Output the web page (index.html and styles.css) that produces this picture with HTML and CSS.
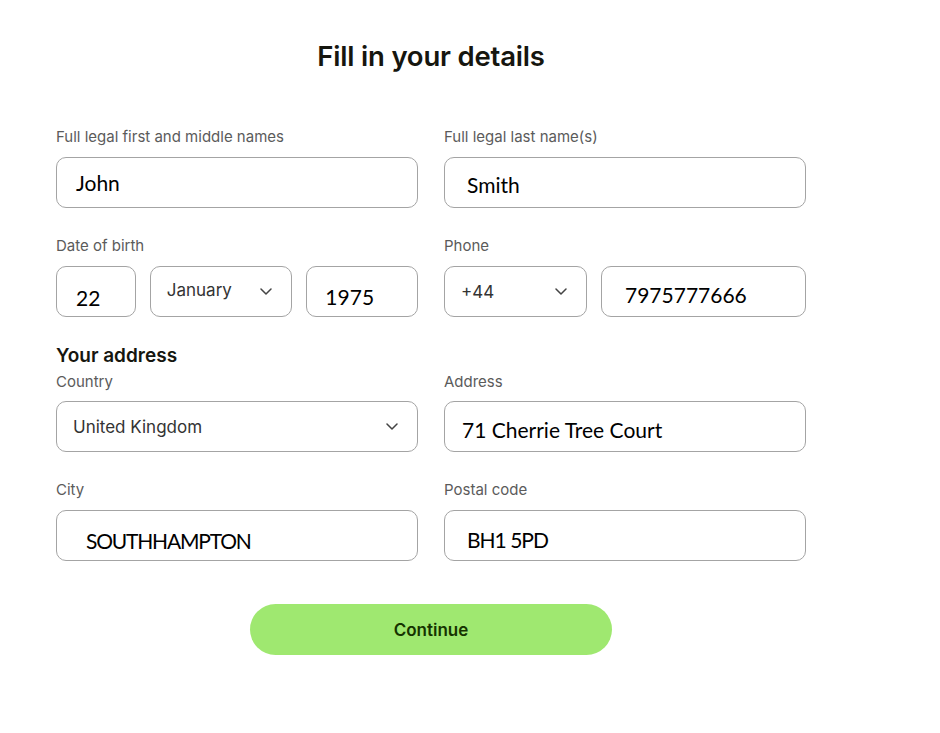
FILE: index.html
```html
<!DOCTYPE html>
<html lang="en">
<head>
<meta charset="utf-8">
<title>Fill in your details</title>
<link rel="stylesheet" href="styles.css">
</head>
<body>
<main class="form">
  <h1 class="title">Fill in your details</h1>

  <div class="row">
    <div class="field">
      <div class="label">Full legal first and middle names</div>
      <div class="box typed t-john">John</div>
    </div>
    <div class="field">
      <div class="label">Full legal last name(s)</div>
      <div class="box typed t-smith">Smith</div>
    </div>
  </div>

  <div class="row">
    <div class="field">
      <div class="label">Date of birth</div>
      <div class="group">
        <div class="box typed day t-day">22</div>
        <div class="box select month"><span>January</span><svg class="chev" viewBox="0 0 12 7"><path d="M1 1l5 5 5-5"/></svg></div>
        <div class="box typed year t-year">1975</div>
      </div>
    </div>
    <div class="field">
      <div class="label">Phone</div>
      <div class="group">
        <div class="box select code"><span>+44</span><svg class="chev" viewBox="0 0 12 7"><path d="M1 1l5 5 5-5"/></svg></div>
        <div class="box typed phone t-phone">7975777666</div>
      </div>
    </div>
  </div>

  <h2 class="section">Your address</h2>
  <div class="row first">
    <div class="field">
      <div class="label">Country</div>
      <div class="box select"><span>United Kingdom</span><svg class="chev" viewBox="0 0 12 7"><path d="M1 1l5 5 5-5"/></svg></div>
    </div>
    <div class="field">
      <div class="label">Address</div>
      <div class="box typed t-addr">71 Cherrie Tree Court</div>
    </div>
  </div>

  <div class="row">
    <div class="field">
      <div class="label">City</div>
      <div class="box typed t-city">SOUTHHAMPTON</div>
    </div>
    <div class="field">
      <div class="label">Postal code</div>
      <div class="box typed t-post">BH1 5PD</div>
    </div>
  </div>

  <div class="actions">
    <button class="continue" type="button">Continue</button>
  </div>
</main>
</body>
</html>
```

FILE: styles.css
```css
* { box-sizing: border-box; }

html, body {
  margin: 0;
  padding: 0;
  background: #ffffff;
}

body {
  font-family: Inter, "Liberation Sans", sans-serif;
  color: #1a1a1a;
}

.form {
  width: 750px;
  margin-left: 56px;
  padding-top: 38px;
}

.title {
  margin: 0 0 54px;
  text-align: center;
  font-size: 27.5px;
  font-weight: 600;
  line-height: 36px;
  color: #16160f;
  letter-spacing: -0.2px;
}

.row {
  display: grid;
  grid-template-columns: 362px 362px;
  column-gap: 26px;
  margin-top: 29px;
}

.title + .row { margin-top: 0; }
.row.first { margin-top: 0; }

.field {
  display: flex;
  flex-direction: column;
}

.label {
  font-size: 15px;
  line-height: 18px;
  color: #5b5b5b;
  margin-bottom: 11px;
}

.row.first .label { margin-bottom: 10px; }

.group {
  display: flex;
  gap: 14px;
}

.box {
  height: 51px;
  border: 1.5px solid #a4a4a4;
  border-radius: 10px;
  display: flex;
  align-items: center;
  background: #fff;
}

.typed {
  font-family: Lato, "Open Sans", sans-serif;
  font-size: 21px;
  color: #000;
  padding-left: 19px;
}

.select {
  justify-content: space-between;
  padding: 0 19px 0 16px;
  font-size: 17px;
  color: #333333;
}

.chev {
  width: 12px;
  height: 7px;
  fill: none;
  stroke: #444;
  stroke-width: 1.5;
  stroke-linecap: round;
  stroke-linejoin: round;
}

.day { width: 80px; }
.month { width: 143px; }
.month span { margin-top: -4px; }
.year { width: 112px; }
.code { width: 143px; }
.phone { width: 205px; }

.t-john { padding-left: 19px; padding-bottom: 1px; }
.t-smith { padding-left: 22px; padding-top: 3px; }
.t-day { padding-left: 19px; padding-top: 11px; }
.t-year { padding-left: 18px; padding-top: 10px; }
.t-phone { padding-left: 23px; padding-top: 5px; }
.t-addr { padding-left: 17px; padding-top: 5px; }
.t-city { padding-left: 29px; padding-top: 9px; letter-spacing: -1.2px; }
.t-post { padding-left: 22px; padding-top: 7px; letter-spacing: -1px; }

.section {
  margin: 28px 0 6px;
  font-size: 19px;
  font-weight: 600;
  line-height: 22px;
  color: #16160f;
}

.actions {
  display: flex;
  justify-content: center;
  margin-top: 43px;
}

.continue {
  width: 362px;
  height: 51px;
  border: none;
  border-radius: 26px;
  background: #9fe870;
  font-family: Inter, "Liberation Sans", sans-serif;
  font-size: 17px;
  font-weight: 600;
  color: #163300;
}
```
